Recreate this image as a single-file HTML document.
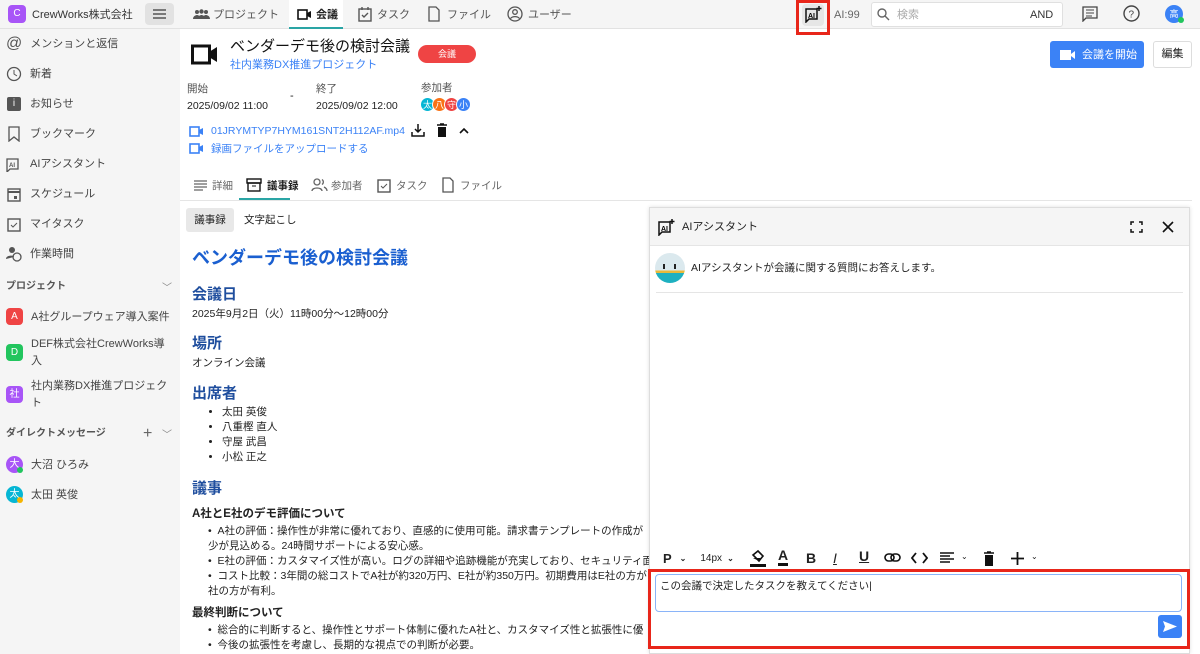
<!DOCTYPE html>
<html><head><meta charset="utf-8"><style>
*{box-sizing:border-box;margin:0;padding:0}
body{width:1200px;height:654px;overflow:hidden;font-family:"Liberation Sans","Noto Sans CJK JP",sans-serif;font-size:11px;color:#222;background:#fff;position:relative}
.a{position:absolute;white-space:nowrap}
.top{position:absolute;left:0;top:0;width:1200px;height:29px;background:#f5f5f5;border-bottom:1px solid #e2e2e2}
.side{position:absolute;left:0;top:29px;width:180px;height:625px;background:#f5f5f5}
.si{position:absolute;left:6px;font-size:11px;color:#444;display:flex;align-items:center;gap:8px;line-height:16px}
.ic{width:16px;height:16px;display:inline-block}
.pb{width:17px;height:17px;border-radius:4px;color:#fff;font-size:10px;display:inline-flex;align-items:center;justify-content:center}
.h2{color:#1f4e9e;font-size:15px;font-weight:bold;line-height:18px}
ul{list-style:disc;padding-left:32px;font-size:11px;line-height:15px}
.av{width:15px;height:15px;border-radius:50%;color:#fff;font-size:9px;display:inline-flex;align-items:center;justify-content:center;border:1px solid #fff}
.t{line-height:14px}
</style></head><body>
<div class="top"></div>
<div class="a" style="left:8px;top:5px;width:18px;height:18px;border-radius:4px;background:#a855f7;color:#fff;font-size:10px;text-align:center;line-height:18px">C</div>
<div class="a t" style="left:32px;top:8px;font-size:11px;color:#333">CrewWorks株式会社</div>
<div class="a" style="left:145px;top:3px;width:29px;height:22px;background:#e2e2e2;border-radius:4px"></div>
<svg class="a" style="left:152px;top:8px" width="15" height="12"><path d="M1 2h13M1 6h13M1 10h13" stroke="#555" stroke-width="1.5"/></svg>
<svg class="a" style="left:193px;top:9px" width="17" height="11"><circle cx="4" cy="3" r="2" fill="#555"/><circle cx="8.5" cy="2.5" r="2.2" fill="#555"/><circle cx="13" cy="3" r="2" fill="#555"/><path d="M0 10c0-3 3-4 4-4s4 1 4 4zM4.5 10c0-3 3-4 4-4s4 1 4 4zM9 10c0-3 3-4 4-4s4 1 4 4z" fill="#555"/></svg>
<div class="a t" style="left:213px;top:8px;color:#555">プロジェクト</div>
<div class="a" style="left:289px;top:0;width:54px;height:29px;background:#fff;border-bottom:2px solid #2aa5a5"></div>
<svg class="a" style="left:297px;top:9px" width="15" height="11"><rect x="1" y="1" width="9" height="9" fill="none" stroke="#111" stroke-width="1.6"/><path d="M10 4l4-2v7l-4-2z" fill="#111"/></svg>
<div class="a t" style="left:316px;top:8px;font-weight:bold">会議</div>
<svg class="a" style="left:358px;top:6px" width="14" height="16"><rect x="1" y="3" width="12" height="12" fill="none" stroke="#555" stroke-width="1.4"/><path d="M4 1v3M10 1v3M4 9l2 2 4-4" stroke="#555" fill="none" stroke-width="1.4"/></svg>
<div class="a t" style="left:377px;top:8px;color:#555">タスク</div>
<svg class="a" style="left:428px;top:6px" width="12" height="16"><path d="M1 1h7l3 3v11H1z" fill="none" stroke="#555" stroke-width="1.3"/></svg>
<div class="a t" style="left:447px;top:8px;color:#555">ファイル</div>
<svg class="a" style="left:507px;top:6px" width="16" height="16"><circle cx="8" cy="8" r="7" fill="none" stroke="#555" stroke-width="1.3"/><circle cx="8" cy="6" r="2.3" fill="none" stroke="#555" stroke-width="1.3"/><path d="M3.5 12.5c2-2.5 7-2.5 9 0" stroke="#555" fill="none" stroke-width="1.3"/></svg>
<div class="a t" style="left:528px;top:8px;color:#555">ユーザー</div>
<div class="a" style="left:796px;top:0;width:34px;height:35px;border:3px solid #e8261a"></div>
<div class="a" style="left:802px;top:4px;width:22px;height:22px;background:#e6e6e6;border-radius:4px"></div>
<svg class="a" style="left:804px;top:5px" width="18" height="18"><path d="M2 4h11v10H5l-3 3z" fill="none" stroke="#111" stroke-width="1.5"/><text x="4" y="13" font-size="7" font-weight="bold" font-family="Liberation Sans">AI</text><path d="M15 1v5M12.5 3.5h5" stroke="#111" stroke-width="1.5"/></svg>
<div class="a t" style="left:834px;top:8px;color:#666;font-size:11px">AI:99</div>
<div class="a" style="left:871px;top:2px;width:192px;height:25px;background:#fff;border:1px solid #e0e0e0;border-radius:3px"></div>
<svg class="a" style="left:877px;top:8px" width="13" height="13"><circle cx="5" cy="5" r="4" fill="none" stroke="#666" stroke-width="1.4"/><path d="M8 8l4 4" stroke="#666" stroke-width="1.4"/></svg>
<div class="a t" style="left:897px;top:8px;color:#aaa">検索</div>
<div class="a t" style="left:1030px;top:8px;color:#333">AND</div>
<svg class="a" style="left:1082px;top:6px" width="16" height="16"><path d="M1 1h14v11H4l-3 3z" fill="none" stroke="#444" stroke-width="1.3"/><path d="M4 4h8M4 7h8M4 10h6" stroke="#444"/></svg>
<svg class="a" style="left:1123px;top:5px" width="17" height="17"><circle cx="8.5" cy="8.5" r="7.5" fill="none" stroke="#444" stroke-width="1.4"/><text x="5.5" y="12.5" font-size="10" font-family="Liberation Sans" fill="#444">?</text></svg>
<div class="a" style="left:1165px;top:5px;width:18px;height:18px;border-radius:50%;background:#3b82f6;color:#fff;font-size:9px;text-align:center;line-height:18px">高</div>
<div class="a" style="left:1178px;top:17px;width:6px;height:6px;border-radius:50%;background:#22c55e"></div>

<div class="side"></div>
<div class="si" style="top:36px"><span style="font-size:16px;color:#555">@</span>メンションと返信</div>
<div class="si" style="top:66px"><svg class="ic"><circle cx="8" cy="8" r="6.5" fill="none" stroke="#555" stroke-width="1.3"/><path d="M8 4v4l3 2" stroke="#555" fill="none"/></svg>新着</div>
<div class="si" style="top:96px"><span class="pb" style="background:#555;width:14px;height:14px;border-radius:2px;font-size:10px;margin:0 1px">i</span>お知らせ</div>
<div class="si" style="top:126px"><svg class="ic"><path d="M3 1h10v14l-5-4-5 4z" fill="none" stroke="#555" stroke-width="1.3"/></svg>ブックマーク</div>
<div class="si" style="top:156px"><svg class="ic"><path d="M1 3h11v10H4l-3 3z" fill="none" stroke="#555" stroke-width="1.3"/><text x="3" y="11" font-size="6" font-weight="bold" fill="#555">AI</text></svg>AIアシスタント</div>
<div class="si" style="top:186px"><svg class="ic"><rect x="2" y="3" width="12" height="12" fill="none" stroke="#555" stroke-width="1.4"/><path d="M2 6h12" stroke="#555" stroke-width="2"/><rect x="8" y="10" width="3" height="3" fill="#555"/></svg>スケジュール</div>
<div class="si" style="top:216px"><svg class="ic"><rect x="2" y="3" width="12" height="12" fill="none" stroke="#555" stroke-width="1.4"/><path d="M5 9l2 2 4-4" stroke="#555" fill="none"/></svg>マイタスク</div>
<div class="si" style="top:246px"><svg class="ic"><circle cx="6" cy="4" r="3" fill="#555"/><path d="M0 13c0-4 8-4 8-2" fill="#555"/><circle cx="11" cy="11" r="4" fill="none" stroke="#555" stroke-width="1.3"/></svg>作業時間</div>
<div class="a t" style="left:6px;top:280px;font-size:10px;font-weight:bold;color:#555">プロジェクト</div>
<div class="a" style="left:162px;top:279px;color:#888;font-size:10px">﹀</div>
<div class="si" style="top:308px"><span class="pb" style="background:#ef4444">A</span>A社グループウェア導入案件</div>
<div class="si" style="top:336px;align-items:flex-start;line-height:17px;white-space:normal;width:168px"><span class="pb" style="background:#22c55e;margin-top:8px;flex:none">D</span><span>DEF株式会社CrewWorks導入</span></div>
<div class="si" style="top:378px;align-items:flex-start;line-height:17px;white-space:normal;width:168px"><span class="pb" style="background:#a855f7;margin-top:8px;flex:none">社</span><span>社内業務DX推進プロジェクト</span></div>
<div class="a t" style="left:6px;top:427px;font-size:10px;font-weight:bold;color:#555">ダイレクトメッセージ</div>
<div class="a" style="left:143px;top:425px;color:#666;font-size:16px;line-height:18px">+</div>
<div class="a" style="left:162px;top:426px;color:#888;font-size:10px">﹀</div>
<div class="si" style="top:456px"><span class="pb" style="background:#a855f7;border-radius:50%">大</span>大沼 ひろみ</div>
<div class="si" style="top:486px"><span class="pb" style="background:#06b6d4;border-radius:50%">太</span>太田 英俊</div>
<div class="a" style="left:17px;top:467px;width:6px;height:6px;border-radius:50%;background:#22c55e"></div>
<div class="a" style="left:17px;top:497px;width:6px;height:6px;border-radius:50%;background:#f5b400"></div>

<!-- main header -->
<svg class="a" style="left:191px;top:44px" width="28" height="22"><rect x="1.5" y="2" width="17" height="17" fill="none" stroke="#111" stroke-width="3"/><path d="M18 8l8-5v15l-8-5z" fill="#111"/></svg>
<div class="a" style="left:230px;top:37px;font-size:15px;line-height:20px;color:#111">ベンダーデモ後の検討会議</div>
<div class="a" style="left:418px;top:45px;width:58px;height:18px;border-radius:9px;background:#ef4444;color:#fff;font-size:9px;text-align:center;line-height:18px">会議</div>
<div class="a t" style="left:230px;top:58px;color:#3b82f6;font-size:11px">社内業務DX推進プロジェクト</div>
<div class="a" style="left:1050px;top:41px;width:94px;height:27px;background:#3b82f6;border-radius:3px"></div>
<svg class="a" style="left:1060px;top:49px" width="16" height="12"><rect x="0" y="1" width="11" height="10" fill="#fff"/><path d="M11 5l4-3v8l-4-3z" fill="#fff"/></svg>
<div class="a t" style="left:1082px;top:48px;color:#fff;font-size:11px">会議を開始</div>
<div class="a" style="left:1153px;top:41px;width:39px;height:27px;border:1px solid #ddd;border-radius:3px;text-align:center;line-height:25px;font-size:11px">編集</div>
<div class="a t" style="left:187px;top:82px;color:#555;font-size:10.5px">開始</div>
<div class="a t" style="left:187px;top:99px;font-size:10.5px">2025/09/02 11:00</div>
<div class="a t" style="left:290px;top:89px;font-size:11px">-</div>
<div class="a t" style="left:316px;top:82px;color:#555;font-size:10.5px">終了</div>
<div class="a t" style="left:316px;top:99px;font-size:10.5px">2025/09/02 12:00</div>
<div class="a t" style="left:421px;top:81px;color:#555;font-size:10.5px">参加者</div>
<div class="a" style="left:420px;top:97px;display:flex"><span class="av" style="background:#06b6d4">太</span><span class="av" style="background:#f97316;margin-left:-3px">八</span><span class="av" style="background:#ef4444;margin-left:-3px">守</span><span class="av" style="background:#3b82f6;margin-left:-3px">小</span></div>
<svg class="a" style="left:189px;top:126px" width="15" height="11"><rect x="1" y="1" width="9" height="9" fill="none" stroke="#3b82f6" stroke-width="1.6"/><path d="M10 4l4-2v7l-4-2z" fill="#3b82f6"/></svg>
<div class="a t" style="left:211px;top:124px;color:#3b82f6;font-size:10.5px">01JRYMTYP7HYM161SNT2H112AF.mp4</div>
<svg class="a" style="left:411px;top:123px" width="14" height="14"><path d="M7 1v8M4 6l3 3 3-3M1 9v4h12V9" stroke="#111" fill="none" stroke-width="1.5"/></svg>
<svg class="a" style="left:436px;top:123px" width="12" height="14"><path d="M1 2h10M4 1h4" stroke="#111" stroke-width="1.5"/><rect x="2" y="4" width="8" height="10" fill="#111"/></svg>
<svg class="a" style="left:459px;top:127px" width="10" height="7"><path d="M1 6l4-4 4 4" stroke="#111" fill="none" stroke-width="1.6"/></svg>
<svg class="a" style="left:189px;top:143px" width="15" height="11"><rect x="1" y="1" width="9" height="9" fill="none" stroke="#3b82f6" stroke-width="1.6"/><path d="M10 4l4-2v7l-4-2z" fill="#3b82f6"/></svg>
<div class="a t" style="left:211px;top:142px;color:#3b82f6;font-size:10.5px">録画ファイルをアップロードする</div>

<!-- tabs -->
<div class="a" style="left:180px;top:200px;width:1012px;height:1px;background:#e5e5e5"></div>
<div class="a" style="left:239px;top:198px;width:51px;height:2px;background:#2aa5a5"></div>
<svg class="a" style="left:194px;top:180px" width="13" height="11"><path d="M0 1h13M0 4h13M0 7h13M0 10h9" stroke="#666" stroke-width="1.2"/></svg>
<div class="a t" style="left:212px;top:179px;color:#666;font-size:10.5px">詳細</div>
<svg class="a" style="left:246px;top:178px" width="16" height="14"><rect x="1" y="1" width="14" height="4" fill="none" stroke="#111" stroke-width="1.4"/><rect x="2" y="5" width="12" height="8" fill="none" stroke="#111" stroke-width="1.4"/><path d="M6 8h4" stroke="#111"/></svg>
<div class="a t" style="left:267px;top:179px;font-size:10.5px;font-weight:bold">議事録</div>
<svg class="a" style="left:311px;top:178px" width="17" height="14"><circle cx="6" cy="4" r="3" fill="none" stroke="#666" stroke-width="1.3"/><path d="M1 13c0-4 10-4 10 0M11 1.5a3 3 0 010 5M13 9c2 1 3 2 3 4" stroke="#666" fill="none" stroke-width="1.3"/></svg>
<div class="a t" style="left:331px;top:179px;color:#666;font-size:10.5px">参加者</div>
<svg class="a" style="left:377px;top:177px" width="14" height="16"><rect x="1" y="3" width="12" height="12" fill="none" stroke="#555" stroke-width="1.4"/><path d="M4 9l2 2 4-4" stroke="#555" fill="none"/></svg>
<div class="a t" style="left:396px;top:179px;color:#666;font-size:10.5px">タスク</div>
<svg class="a" style="left:442px;top:177px" width="12" height="16"><path d="M1 1h7l3 3v11H1z" fill="none" stroke="#555" stroke-width="1.3"/></svg>
<div class="a t" style="left:460px;top:179px;color:#666;font-size:10.5px">ファイル</div>

<div class="a" style="left:186px;top:208px;width:48px;height:24px;background:#e8e8e8;border-radius:3px;text-align:center;line-height:24px;font-size:10.5px">議事録</div>
<div class="a t" style="left:244px;top:213px;font-size:10.5px">文字起こし</div>

<div class="a" style="left:192px;top:247px;color:#1a5fd0;font-size:18px;line-height:22px;font-weight:bold">ベンダーデモ後の検討会議</div>
<div class="a h2" style="left:192px;top:286px">会議日</div>
<div class="a t" style="left:192px;top:307px;font-size:10.5px">2025年9月2日（火）11時00分〜12時00分</div>
<div class="a h2" style="left:192px;top:335px">場所</div>
<div class="a t" style="left:192px;top:356px;font-size:10.5px">オンライン会議</div>
<div class="a h2" style="left:192px;top:385px">出席者</div>
<ul class="a" style="left:190px;top:405px;font-size:10.5px"><li>太田 英俊</li><li>八重樫 直人</li><li>守屋 武昌</li><li>小松 正之</li></ul>
<div class="a h2" style="left:192px;top:480px">議事</div>
<div class="a" style="left:192px;top:507px;font-size:11.5px;line-height:15px;font-weight:bold">A社とE社のデモ評価について</div>
<div class="a" style="left:208px;top:524px;font-size:10.5px;line-height:15px">• &nbsp;A社の評価：操作性が非常に優れており、直感的に使用可能。請求書テンプレートの作成が<br>少が見込める。24時間サポートによる安心感。<br>• &nbsp;E社の評価：カスタマイズ性が高い。ログの詳細や追跡機能が充実しており、セキュリティ面<br>• &nbsp;コスト比較：3年間の総コストでA社が約320万円、E社が約350万円。初期費用はE社の方が<br>社の方が有利。</div>
<div class="a" style="left:192px;top:606px;font-size:11.5px;line-height:15px;font-weight:bold">最終判断について</div>
<div class="a" style="left:208px;top:623px;font-size:10.5px;line-height:15px">• &nbsp;総合的に判断すると、操作性とサポート体制に優れたA社と、カスタマイズ性と拡張性に優<br>• &nbsp;今後の拡張性を考慮し、長期的な視点での判断が必要。</div>

<!-- AI panel -->
<div class="a" style="left:649px;top:207px;width:541px;height:447px;background:#fff;border:1px solid #ddd;box-shadow:0 0 4px rgba(0,0,0,.12)"></div>
<div class="a" style="left:650px;top:208px;width:539px;height:38px;background:#f5f5f5;border-bottom:1px solid #e5e5e5"></div>
<svg class="a" style="left:657px;top:218px" width="18" height="18"><path d="M2 4h11v10H5l-3 3z" fill="none" stroke="#111" stroke-width="1.5"/><text x="4" y="13" font-size="7" font-weight="bold" font-family="Liberation Sans">AI</text><path d="M15 1v5M12.5 3.5h5" stroke="#111" stroke-width="1.5"/></svg>
<div class="a t" style="left:682px;top:220px;font-size:11px">AIアシスタント</div>
<svg class="a" style="left:1130px;top:221px" width="13" height="12"><path d="M1 4V1h3M9 1h3v3M12 8v3H9M4 11H1V8" stroke="#111" fill="none" stroke-width="1.5"/></svg>
<svg class="a" style="left:1162px;top:221px" width="12" height="12"><path d="M1 1l10 10M11 1L1 11" stroke="#111" stroke-width="1.6"/></svg>
<div class="a" style="left:655px;top:253px;width:30px;height:30px;border-radius:50%;background:linear-gradient(#dbe9ee 0 58%,#e8b93a 58% 66%,#1eb0c0 66%)"></div>
<div class="a" style="left:663px;top:264px;width:2px;height:5px;background:#222"></div>
<div class="a" style="left:674px;top:264px;width:2px;height:5px;background:#222"></div>
<div class="a t" style="left:691px;top:261px;font-size:10.5px">AIアシスタントが会議に関する質問にお答えします。</div>
<div class="a" style="left:656px;top:292px;width:527px;height:1px;background:#e5e5e5"></div>
<div class="a" style="left:663px;top:551px;font-size:13px;font-weight:bold;color:#222;display:flex;align-items:center;line-height:16px">
<span>P</span><span style="font-size:8px;margin-left:8px">⌄</span>
<span style="font-size:10px;font-weight:normal;margin-left:14px">14px</span><span style="font-size:8px;margin-left:5px">⌄</span>
</div>
<svg class="a" style="left:749px;top:549px" width="18" height="18"><path d="M4 6l5-4 5 5-4 5z" fill="none" stroke="#111" stroke-width="1.6"/><path d="M4 9h9l-3 3z" fill="#111"/><rect x="1" y="15" width="16" height="3" fill="#111"/></svg>
<div class="a" style="left:778px;top:548px;font-size:14px;font-weight:bold;border-bottom:3px solid #111;line-height:15px">A</div>
<div class="a" style="left:806px;top:550px;font-size:14px;line-height:16px;font-weight:bold">B</div>
<div class="a" style="left:833px;top:550px;font-size:14px;line-height:16px;font-style:italic;text-decoration:underline">I</div>
<div class="a" style="left:859px;top:548px;font-size:14px;line-height:16px;font-weight:bold;text-decoration:underline">U</div>
<svg class="a" style="left:884px;top:552px" width="17" height="12"><rect x="1" y="2" width="9" height="7" rx="3.5" fill="none" stroke="#111" stroke-width="1.6"/><rect x="7" y="2" width="9" height="7" rx="3.5" fill="none" stroke="#111" stroke-width="1.6"/></svg>
<svg class="a" style="left:911px;top:552px" width="17" height="12"><path d="M5 1L1 6l4 5M12 1l4 5-4 5" stroke="#111" fill="none" stroke-width="1.8"/></svg>
<svg class="a" style="left:940px;top:552px" width="14" height="12"><path d="M0 1h14M0 4h10M0 7h14M0 10h10" stroke="#111" stroke-width="1.4"/></svg>
<div class="a" style="left:961px;top:552px;font-size:8px">⌄</div>
<svg class="a" style="left:983px;top:551px" width="12" height="15"><path d="M1 2h10M4 1h4" stroke="#111" stroke-width="1.5"/><rect x="2" y="4" width="8" height="11" fill="#111"/></svg>
<svg class="a" style="left:1011px;top:552px" width="13" height="13"><path d="M6.5 0v13M0 6.5h13" stroke="#111" stroke-width="1.8"/></svg>
<div class="a" style="left:1031px;top:552px;font-size:8px">⌄</div>
<div class="a" style="left:648px;top:569px;width:542px;height:80px;border:3px solid #e8261a"></div>
<div class="a" style="left:655px;top:574px;width:527px;height:38px;border:1px solid #8ab4f8;border-radius:4px"></div>
<div class="a t" style="left:660px;top:579px;font-size:10.5px">この会議で決定したタスクを教えてください|</div>
<div class="a" style="left:1158px;top:615px;width:24px;height:23px;background:#3b82f6;border-radius:3px"></div>
<svg class="a" style="left:1162px;top:620px" width="16" height="13"><path d="M1 1l14 5.5L1 12l2-5.5z" fill="#fff"/></svg>
</body></html>
